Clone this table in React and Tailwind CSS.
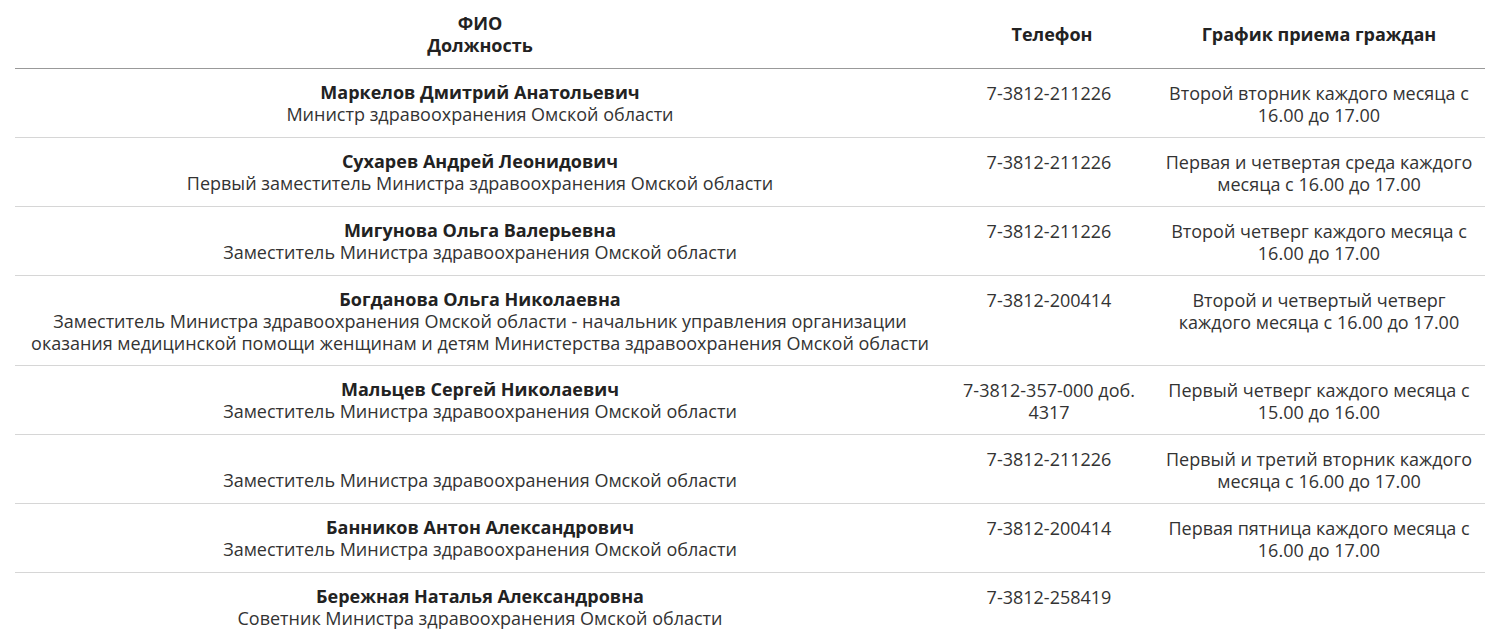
import React from 'react';

const rows = [
  {
    name: 'Маркелов Дмитрий Анатольевич',
    post: 'Министр здравоохранения Омской области',
    phone: '7-3812-211226',
    schedule: 'Второй вторник каждого месяца с 16.00 до 17.00',
  },
  {
    name: 'Сухарев Андрей Леонидович',
    post: 'Первый заместитель Министра здравоохранения Омской области',
    phone: '7-3812-211226',
    schedule: 'Первая и четвертая среда каждого месяца с 16.00 до 17.00',
  },
  {
    name: 'Мигунова Ольга Валерьевна',
    post: 'Заместитель Министра здравоохранения Омской области',
    phone: '7-3812-211226',
    schedule: 'Второй четверг каждого месяца с 16.00 до 17.00',
  },
  {
    name: 'Богданова Ольга Николаевна',
    post: 'Заместитель Министра здравоохранения Омской области - начальник управления организации оказания медицинской помощи женщинам и детям Министерства здравоохранения Омской области',
    phone: '7-3812-200414',
    schedule: 'Второй и четвертый четверг каждого месяца с 16.00 до 17.00',
  },
  {
    name: 'Мальцев Сергей Николаевич',
    post: 'Заместитель Министра здравоохранения Омской области',
    phone: '7-3812-357-000 доб. 4317',
    schedule: 'Первый четверг каждого месяца с 15.00 до 16.00',
  },
  {
    name: '',
    post: 'Заместитель Министра здравоохранения Омской области',
    phone: '7-3812-211226',
    schedule: 'Первый и третий вторник каждого месяца с 16.00 до 17.00',
  },
  {
    name: 'Банников Антон Александрович',
    post: 'Заместитель Министра здравоохранения Омской области',
    phone: '7-3812-200414',
    schedule: 'Первая пятница каждого месяца с 16.00 до 17.00',
  },
  {
    name: 'Бережная Наталья Александровна',
    post: 'Советник Министра здравоохранения Омской области',
    phone: '7-3812-258419',
    schedule: '',
  },
];

export default function App() {
  return (
    <div className="bg-white px-[15px] text-[#333] font-['Open_Sans',sans-serif] text-[18px] leading-[22px]">
      <table className="w-[1470px] table-fixed border-collapse text-center">
        <colgroup>
          <col className="w-[930px]" />
          <col className="w-[208px]" />
          <col className="w-[332px]" />
        </colgroup>
        <thead>
          <tr className="h-[68px] border-b border-[#999] text-[#222]">
            <th className="px-2 align-middle font-bold">
              ФИО
              <br />
              Должность
            </th>
            <th className="pl-[14px] pr-2 align-middle font-bold">Телефон</th>
            <th className="px-2 align-middle font-bold">График приема граждан</th>
          </tr>
        </thead>
        <tbody>
          {rows.map((r, i) => (
            <tr key={i} className={i < rows.length - 1 ? 'border-b border-[#d6d6d6]' : ''}>
              <td className="px-2 pt-[12px] pb-[11px] align-top">
                <div className="font-bold text-[#222] min-h-[22px]">{r.name}</div>
                <div>{r.post}</div>
              </td>
              <td className="px-2 pt-[13px] pb-[11px] align-top">{r.phone}</td>
              <td className="px-2 pt-[13px] pb-[11px] align-top">{r.schedule}</td>
            </tr>
          ))}
        </tbody>
      </table>
    </div>
  );
}
